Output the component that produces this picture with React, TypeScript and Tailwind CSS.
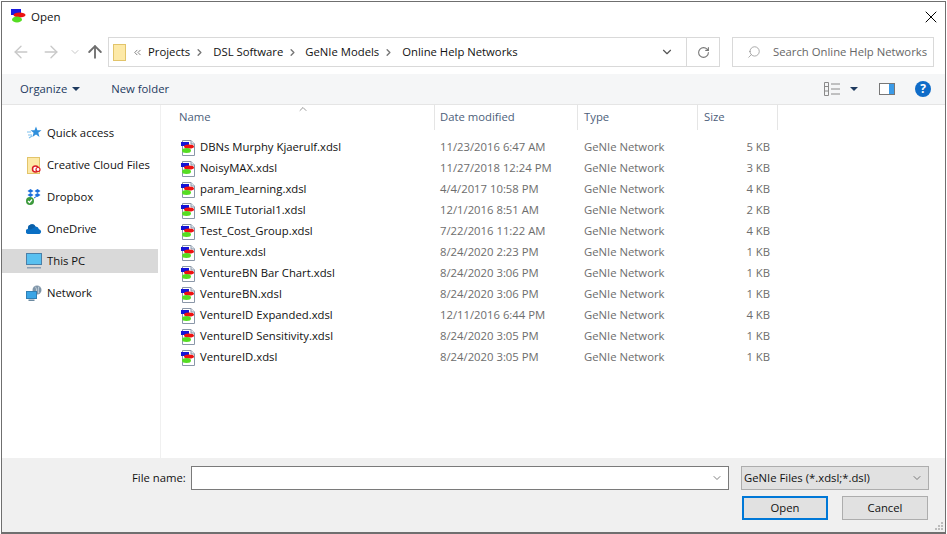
import type React from "react"
import { ArrowLeft, ArrowRight, ArrowUp, ChevronDown, ChevronRight, ChevronsLeft, ChevronUp, RotateCw, Search, X } from "lucide-react"

const files = [
  ["DBNs Murphy Kjaerulf.xdsl", "11/23/2016 6:47 AM", "5 KB"],
  ["NoisyMAX.xdsl", "11/27/2018 12:24 PM", "3 KB"],
  ["param_learning.xdsl", "4/4/2017 10:58 PM", "4 KB"],
  ["SMILE Tutorial1.xdsl", "12/1/2016 8:51 AM", "2 KB"],
  ["Test_Cost_Group.xdsl", "7/22/2016 11:22 AM", "4 KB"],
  ["Venture.xdsl", "8/24/2020 2:23 PM", "1 KB"],
  ["VentureBN Bar Chart.xdsl", "8/24/2020 3:06 PM", "1 KB"],
  ["VentureBN.xdsl", "8/24/2020 3:06 PM", "1 KB"],
  ["VentureID Expanded.xdsl", "12/11/2016 6:44 PM", "4 KB"],
  ["VentureID Sensitivity.xdsl", "8/24/2020 3:05 PM", "1 KB"],
  ["VentureID.xdsl", "8/24/2020 3:05 PM", "1 KB"],
]

function AppIcon() {
  return (
    <svg width="16" height="16" viewBox="0 0 16 16" className="shrink-0">
      <rect x="0" y="0" width="10" height="6" fill="#1a1ae0" />
      <ellipse cx="8.500" cy="6" rx="6" ry="2.500" fill="#ee1111" />
      <ellipse cx="6" cy="10.500" rx="5" ry="3" fill="#55dd22" />
    </svg>
  )
}

function FileIcon() {
  return (
    <svg width="16" height="16" viewBox="0 0 16 16" className="shrink-0">
      <path d="M1.500 .5H10L13.500 4V15.500H1.500Z" fill="#fff" stroke="#8a97a8" />
      <path d="M10 .5V4H13.500" fill="#dfe6ee" stroke="#8a97a8" />
      <rect x="0" y="2" width="8" height="4" fill="#1414d8" />
      <ellipse cx="8" cy="6.500" rx="5" ry="2" fill="#ee1111" />
      <ellipse cx="5.500" cy="10.500" rx="4.500" ry="2.500" fill="#55dd22" />
    </svg>
  )
}

function NavItem({ label, icon, active }: { label: string; icon: React.ReactNode; active?: boolean }) {
  return (
    <div className={`flex h-6 items-center gap-[5px] pl-[24px] ${active ? "bg-[#d9d9d9]" : ""}`}>
      <span className="flex w-4 justify-center">{icon}</span>
      <span className="whitespace-nowrap">{label}</span>
    </div>
  )
}

function Crumb() {
  return <ChevronRight className="mx-[4px] size-[11px] text-[#777]" strokeWidth={3} />
}

export default function App() {
  return (
    <div className="h-[534px] w-[947px] overflow-hidden bg-white pl-px pr-px pt-px">
      <div className="flex h-[533px] flex-col border border-b-2 border-[#6f6f6f] font-['Open_Sans',sans-serif] text-[11.3px] text-[#111]">
        <div className="flex h-[29px] shrink-0 items-center gap-[4px] pl-[9px]">
          <AppIcon />
          <span className="text-[11.5px]">Open</span>
          <X className="ml-auto mr-[4px] size-5 text-black" strokeWidth={1.2} />
        </div>

        <div className="mt-[6px] flex h-[30px] shrink-0 items-center">
          <div className="flex w-[106px] shrink-0 items-center pl-[9px] text-[#c8c8c8]">
            <ArrowLeft className="size-5 shrink-0" strokeWidth={1.6} />
            <ArrowRight className="ml-[10px] size-5 shrink-0" strokeWidth={1.6} />
            <ChevronDown className="ml-[8px] size-3 shrink-0" strokeWidth={2} />
            <ArrowUp className="ml-[4px] size-5 shrink-0 text-[#6d6d6d]" strokeWidth={2.2} />
          </div>
          <div className="flex h-[30px] w-[612px] shrink-0 items-center border border-[#d9d9d9] pl-[4px]">
            <svg width="13" height="17" viewBox="0 0 13 17">
              <rect x=".5" y=".5" width="12" height="16" fill="#fde9a7" stroke="#e2c46a" />
            </svg>
            <ChevronsLeft className="ml-[6px] size-[11px] text-[#777]" />
            <span className="ml-[5px]">Projects</span>
            <Crumb />
            <span className="ml-[4px]">DSL Software</span>
            <Crumb />
            <span className="ml-[3px]">GeNIe Models</span>
            <Crumb />
            <span className="ml-[4px]">Online Help Networks</span>
            <ChevronDown className="ml-auto mr-[12px] size-[14px] text-[#555]" strokeWidth={2} />
            <div className="flex h-full w-[33px] items-center justify-center border-l border-[#d9d9d9]">
              <RotateCw className="size-[13px] text-[#777]" strokeWidth={2} />
            </div>
          </div>
          <div className="ml-[12px] flex h-[30px] w-[202px] shrink-0 items-center border border-[#d9d9d9] pl-[14px] text-[#666]">
            <Search className="size-[14px] -scale-x-100 text-[#888]" strokeWidth={1.2} />
            <span className="ml-[12px] whitespace-nowrap">Search Online Help Networks</span>
          </div>
        </div>

        <div className="mt-[7px] flex h-[31px] shrink-0 items-center border-b border-[#e5e5e5] bg-[#f5f6f7] pl-[18px] text-[#1e3a5f]">
          <span>Organize</span>
          <span className="ml-[5px] size-0 border-x-[4px] border-t-[4px] border-x-transparent border-t-[#1e3a5f]" />
          <span className="ml-[31px]">New folder</span>
          <svg width="17" height="14" viewBox="0 0 17 14" className="ml-auto text-[#8a8a8a]" stroke="currentColor" fill="none">
            <path d="M.5 .5h4v13h-4zM.5 4.500h4M.5 9h4M7 2h9M7 7h9M7 12h9" />
          </svg>
          <span className="ml-[9px] size-0 border-x-[4px] border-t-[4px] border-x-transparent border-t-[#1e3a5f]" />
          <svg width="16" height="12" viewBox="0 0 16 12" className="ml-[21px]">
            <rect x=".5" y=".5" width="15" height="11" fill="#fff" stroke="#777" />
            <rect x="10" y="1" width="5" height="10" fill="#3b9be8" />
          </svg>
          <span className="ml-[20px] mr-[14px] flex size-4 items-center justify-center rounded-full bg-[#0f6cc8] text-[12px] font-bold text-white">?</span>
        </div>

        <div className="flex min-h-0 flex-1">
          <div className="w-[159px] shrink-0 border-r border-[#f0f0f0] pt-[16px]">
            <div className="flex flex-col gap-2 pr-[2px]">
              <NavItem
                label="Quick access"
                icon={
                  <svg width="16" height="16" viewBox="0 0 16 16">
                    <path d="M10 1.500l1.400 3.700H15.500l-3.200 2.600 1.200 4.200-3.500-2.400-3.600 2.400 1.200-4.200L4.500 5.200h4Z" fill="#2f8fdc" />
                    <path d="M1 7h4M2 10h4M3 13l3-2" stroke="#7cc0ee" strokeWidth="1.200" />
                  </svg>
                }
              />
              <NavItem
                label="Creative Cloud Files"
                icon={
                  <svg width="14" height="17" viewBox="0 0 14 17">
                    <rect x=".5" y=".5" width="12" height="16" fill="#fde9a7" stroke="#e2c46a" />
                    <circle cx="8.500" cy="12" r="3" fill="#fff" stroke="#da1f26" strokeWidth="1.500" />
                    <circle cx="11" cy="12.500" r="2" fill="#fff" stroke="#da1f26" strokeWidth="1.200" />
                  </svg>
                }
              />
              <NavItem
                label="Dropbox"
                icon={
                  <svg width="16" height="16" viewBox="0 0 16 16">
                    <path d="M4.500 0l3 2-3 2-3-2ZM11.500 0l3 2-3 2-3-2ZM4.500 4l3 2-3 2-3-2ZM11.500 4l3 2-3 2-3-2ZM8 8.500l3-2 1 .5-4 2.500Z" fill="#1a6fdc" />
                    <circle cx="4" cy="12" r="4" fill="#3c9a3c" />
                    <path d="M2 12l1.500 1.500L6 10.500" stroke="#fff" strokeWidth="1.200" fill="none" />
                  </svg>
                }
              />
              <NavItem
                label="OneDrive"
                icon={
                  <svg width="16" height="10" viewBox="0 0 16 10">
                    <path d="M2.500 10a2.500 2.500 0 0 1-.5-5 4 4 0 0 1 7.500-2.500 3.500 3.500 0 0 1 3.500 2.700A2.500 2.500 0 0 1 13.500 10Z" fill="#0a6fc4" />
                    <path d="M2 5a4 4 0 0 1 7.500-2.500L5 5.500Z" fill="#0b5fa8" />
                  </svg>
                }
              />
              <NavItem
                active
                label="This PC"
                icon={
                  <svg width="16" height="16" viewBox="0 0 16 16">
                    <rect x=".5" y=".5" width="15" height="11" fill="#58c0f0" stroke="#4a7fa8" />
                    <rect x="1" y="14" width="14" height="1.500" fill="#8aa0b5" />
                  </svg>
                }
              />
              <NavItem
                label="Network"
                icon={
                  <svg width="16" height="16" viewBox="0 0 16 16">
                    <circle cx="11" cy="5" r="4.500" fill="#7f95a8" />
                    <path d="M9 1.500c2 2 2 5 0 7M13 1.500c-1 2-1 5 0 7" stroke="#c6d3dd" fill="none" />
                    <rect x=".5" y="6.500" width="10" height="7" fill="#3aa5e6" stroke="#2f7fb5" />
                    <rect x="2.500" y="14.500" width="6" height="1.500" fill="#6c8aa0" />
                  </svg>
                }
              />
            </div>
          </div>

          <div className="min-w-0 flex-1">
            <div className="relative flex h-[25px] text-[#4c607a]">
              <ChevronUp className="absolute left-[136px] top-[-2px] size-3 text-[#777]" strokeWidth={1.5} />
              <span className="flex w-[274px] items-center border-r border-[#e5e5e5] pl-[18px]">Name</span>
              <span className="flex w-[143px] items-center border-r border-[#e5e5e5] pl-[5px]">Date modified</span>
              <span className="flex w-[120px] items-center border-r border-[#e5e5e5] pl-[6px]">Type</span>
              <span className="flex w-[80px] items-center border-r border-[#e5e5e5] pl-[6px]">Size</span>
            </div>
            <div className="mt-[7px]">
              {files.map((f) => (
                <div key={f[0]} className="flex h-[21px] items-center">
                  <div className="flex w-[274px] items-center gap-[3px] pl-[20px]">
                    <FileIcon />
                    <span className="whitespace-nowrap">{f[0]}</span>
                  </div>
                  <span className="w-[143px] whitespace-nowrap pl-[5px] text-[#6d6d6d]">{f[1]}</span>
                  <span className="w-[120px] pl-[6px] text-[#6d6d6d]">GeNIe Network</span>
                  <span className="w-[72px] text-right text-[#6d6d6d]">{f[2]}</span>
                </div>
              ))}
            </div>
          </div>
        </div>

        <div className="relative h-[74px] shrink-0 bg-[#f0f0f0] pt-[8px]">
          <div className="flex h-[24px] items-center">
            <span className="ml-[130px] w-[59px] whitespace-nowrap">File name:</span>
            <div className="flex h-[24px] w-[538px] items-center justify-end border border-[#7a7a7a] bg-white pr-[5px]">
              <ChevronDown className="size-[12px] text-[#555]" strokeWidth={1.5} />
            </div>
            <div className="ml-[12px] flex h-[24px] w-[188px] items-center justify-between border border-[#adadad] bg-[#e1e1e1] pl-[2px] pr-[5px]">
              <span className="whitespace-nowrap">GeNIe Files (*.xdsl;*.dsl)</span>
              <ChevronDown className="size-[12px] text-[#555]" strokeWidth={1.5} />
            </div>
          </div>
          <div className="mt-[6px] flex justify-end pr-[17px]">
            <button className="h-6 w-[86px] border-2 border-[#0078d7] bg-[#e1e1e1]">Open</button>
            <button className="ml-[14px] h-6 w-[86px] border border-[#adadad] bg-[#e1e1e1]">Cancel</button>
          </div>
          <svg width="10" height="10" viewBox="0 0 10 10" className="absolute bottom-[1px] right-[1px]" fill="#bcbcbc">
            <path d="M7 1h2v2H7zM4 4h2v2H4zM7 4h2v2H7zM1 7h2v2H1zM4 7h2v2H4zM7 7h2v2H7z" />
          </svg>
        </div>
      </div>
    </div>
  )
}
